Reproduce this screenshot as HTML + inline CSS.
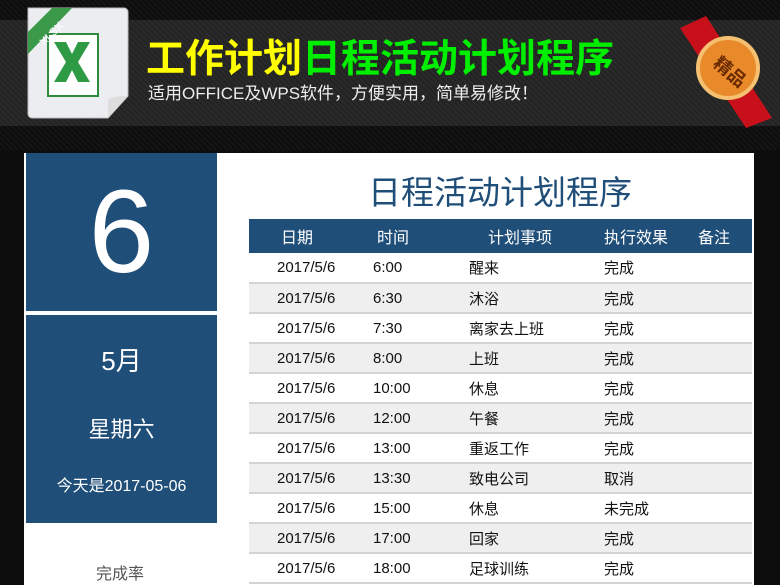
<!DOCTYPE html>
<html><head><meta charset="utf-8"><style>
*{margin:0;padding:0;box-sizing:border-box}
body{width:780px;height:585px;overflow:hidden;background:#0d0d0d;font-family:"Liberation Sans","Noto Sans CJK SC",sans-serif;position:relative}
.band{position:absolute;left:0;top:20px;width:780px;height:106px;background:#232323}
.top{position:absolute;left:0;top:0;width:780px;height:150px;background:repeating-linear-gradient(45deg,rgba(255,255,255,.03) 0 2px,transparent 2px 4px)}
.t1{position:absolute;left:146px;top:28px;font-size:39px;font-weight:bold;color:#ff0;white-space:nowrap}
.t1 span{color:#0e0}
.t2{position:absolute;left:148px;top:79px;font-size:17px;color:#eee;white-space:nowrap}
.panel{position:absolute;left:24px;top:153px;width:730px;height:432px;background:#fff}
.blue{position:absolute;left:26px;background:#1f4e79;width:191px;color:#fff;text-align:center}
.title{position:absolute;left:368px;top:166px;font-size:33px;color:#1f4e79}
table{position:absolute;left:249px;top:219px;width:503px;border-collapse:collapse;font-size:15px;table-layout:fixed}
th{background:#1f4e79;color:#fff;font-weight:normal;height:34px;text-align:left;font-size:16px}
td{height:30px;border-bottom:2px solid #d4d4d4;color:#111}
tr:nth-child(odd) td{background:#efefef}
</style></head><body>
<div class="band"></div><div class="top"></div>
<svg style="position:absolute;left:24px;top:4px" width="110" height="118">
<path d="M4 4 H100 a4 4 0 0 1 4 4 V92 L84 114 H8 a4 4 0 0 1 -4 -4Z" fill="#ecedf1" stroke="#bbb"/>
<path d="M84 114 L84 96 Q86 92 104 92Z" fill="#ddd"/>
<rect x="24" y="30" width="50" height="62" fill="#fff" stroke="#2e8b3e" stroke-width="2"/>
<path d="M30 38h12l6 12 6-12h12l-12 20 12 20h-12l-6-12-6 12h-12l12-20z" fill="#2e9b44"/>
<path d="M4 50 L4 28 L28 4 L48 4Z" fill="#3a9a4a"/>
<text x="10" y="38" transform="rotate(-45 20 28)" fill="#fff" font-size="11" font-family="Liberation Sans">XLSX</text>
</svg>
<div class="t1">工作计划<span>日程活动计划程序</span></div>
<div class="t2">适用OFFICE及WPS软件，方便实用，简单易修改！</div>
<svg style="position:absolute;left:676px;top:8px" width="104" height="124">
<path d="M4 20 L30 8 L96 110 L70 120Z" fill="#c8101a"/>
<circle cx="52" cy="60" r="30" fill="#e8892a" stroke="#f5c070" stroke-width="4"/>
<text x="38" y="68" fill="#6a2a00" font-size="18" font-weight="bold" transform="rotate(40 52 60)" font-family="Noto Sans CJK SC">精品</text>
</svg>
<div class="panel"></div>
<div class="blue" style="top:153px;height:158px;font-size:118px;line-height:158px">6</div>
<div class="blue" style="top:315px;height:208px">
<div style="font-size:26px;margin-top:26px">5月</div>
<div style="font-size:22px;margin-top:34px">星期六</div>
<div style="font-size:16px;margin-top:28px">今天是2017-05-06</div>
</div>
<div style="position:absolute;left:96px;top:560px;font-size:16px;color:#555">完成率</div>
<div class="title">日程活动计划程序</div>
<table>
<colgroup><col style="width:124px"><col style="width:96px"><col style="width:135px"><col style="width:94px"><col></colgroup>
<tr><th style="padding-left:32px">日期</th><th style="padding-left:4px">时间</th><th style="padding-left:19px">计划事项</th><th>执行效果</th><th>备注</th></tr>
<tr><td style="padding-left:28px">2017/5/6</td><td>6:00</td><td>醒来</td><td>完成</td><td></td></tr>
<tr><td style="padding-left:28px">2017/5/6</td><td>6:30</td><td>沐浴</td><td>完成</td><td></td></tr>
<tr><td style="padding-left:28px">2017/5/6</td><td>7:30</td><td>离家去上班</td><td>完成</td><td></td></tr>
<tr><td style="padding-left:28px">2017/5/6</td><td>8:00</td><td>上班</td><td>完成</td><td></td></tr>
<tr><td style="padding-left:28px">2017/5/6</td><td>10:00</td><td>休息</td><td>完成</td><td></td></tr>
<tr><td style="padding-left:28px">2017/5/6</td><td>12:00</td><td>午餐</td><td>完成</td><td></td></tr>
<tr><td style="padding-left:28px">2017/5/6</td><td>13:00</td><td>重返工作</td><td>完成</td><td></td></tr>
<tr><td style="padding-left:28px">2017/5/6</td><td>13:30</td><td>致电公司</td><td>取消</td><td></td></tr>
<tr><td style="padding-left:28px">2017/5/6</td><td>15:00</td><td>休息</td><td>未完成</td><td></td></tr>
<tr><td style="padding-left:28px">2017/5/6</td><td>17:00</td><td>回家</td><td>完成</td><td></td></tr>
<tr><td style="padding-left:28px">2017/5/6</td><td>18:00</td><td>足球训练</td><td>完成</td><td></td></tr>
</table>
</body></html>
